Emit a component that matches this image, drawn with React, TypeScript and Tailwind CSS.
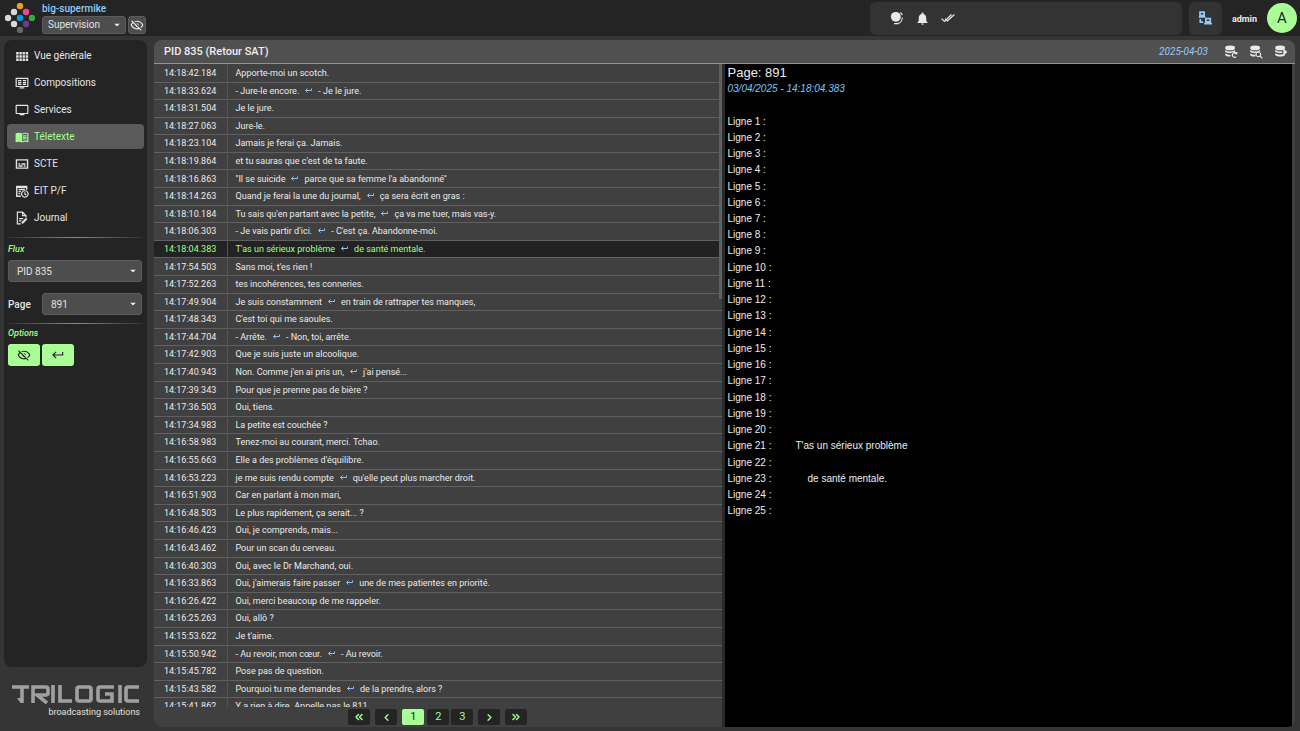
import type { ReactNode } from "react";
import { ChevronLeft, ChevronRight, ChevronsLeft, ChevronsRight } from "lucide-react";
import { MdOutlineTv, MdMenuBook, MdNotifications } from "react-icons/md";

const eyeOff =
	"M2,5.27L3.28,4L20,20.72L18.73,22L15.65,18.92C14.5,19.3 13.28,19.5 12,19.5C7,19.5 2.73,16.39 1,12C1.69,10.24 2.79,8.69 4.19,7.46L2,5.27M12,9A3,3 0 0,1 15,12C15,12.35 14.94,12.69 14.83,13L11,9.17C11.31,9.06 11.65,9 12,9M12,4.5C17,4.5 21.27,7.61 23,12C22.18,14.08 20.79,15.88 19,17.19L17.58,15.76C18.94,14.82 20.06,13.54 20.82,12C19.17,8.64 15.76,6.5 12,6.5C10.91,6.5 9.84,6.68 8.84,7L7.3,5.47C8.74,4.85 10.33,4.5 12,4.5M3.18,12C4.83,15.36 8.24,17.5 12,17.5C12.69,17.5 13.37,17.43 14,17.29L11.72,15C10.29,14.85 9.15,13.71 9,12.28L5.6,8.87C4.61,9.72 3.78,10.78 3.18,12Z";
const keyReturn = "M19,7V11H5.83L9.41,7.41L8,6L2,12L8,18L9.41,16.58L5.83,13H21V7H19Z";

function Icon({ size = 14, children }: { size?: number; children: ReactNode }) {
	return (
		<svg width={size} height={size} viewBox="0 0 24 24" fill="currentColor" className="shrink-0" aria-hidden="true">
			{children}
		</svg>
	);
}

function Stroke({ d, width = 2 }: { d: string; width?: number }) {
	return <path d={d} fill="none" stroke="currentColor" strokeWidth={width} />;
}

const dots = [
	{ x: 15, y: 3, color: "#f9a01b" },
	{ x: 9, y: 9, color: "#d8d8d8" },
	{ x: 21, y: 9, color: "#ec4899" },
	{ x: 3, y: 15, color: "#d8d8d8" },
	{ x: 15, y: 15, color: "#0c9bd8" },
	{ x: 27, y: 15, color: "#3aa648" },
	{ x: 9, y: 21, color: "#d8d8d8" },
	{ x: 21, y: 21, color: "#6b3a8c" },
	{ x: 15, y: 27, color: "#666666" },
];

function DotsLogo() {
	return (
		<svg width="30" height="30" viewBox="0 0 30 30" role="img" aria-label="Logo">
			{dots.map((d) => (
				<circle key={`${d.x}-${d.y}`} cx={d.x} cy={d.y} r="3.2" fill={d.color} />
			))}
		</svg>
	);
}

const nav = [
	{
		label: "Vue générale",
		icon: (
			<Icon>
				<path d="M2 5H6.3V9.6H2ZM7.6 5H11.7V9.6H7.6ZM13 5H17V9.6H13ZM18.3 5H22.5V9.6H18.3ZM2 10.9H6.3V15H2ZM7.6 10.9H11.7V15H7.6ZM13 10.9H17V15H13ZM18.3 10.9H22.5V15H18.3ZM2 16.3H6.3V20.5H2ZM7.6 16.3H11.7V20.5H7.6ZM13 16.3H17V20.5H13ZM18.3 16.3H22.5V20.5H18.3Z" />
			</Icon>
		),
	},
	{
		label: "Compositions",
		icon: (
			<Icon>
				<Stroke d="M2 4H22V18H2Z" />
				<Stroke d="M8 20.5H16M5 8H11M5 11.2H11M5 14.4H11M13.5 8H19M13.5 11.2H19M13.5 14.4H19" width={2.2} />
			</Icon>
		),
	},
	{ label: "Services", icon: <MdOutlineTv size={14} /> },
	{ label: "Téletexte", icon: <MdMenuBook size={14} />, active: true },
	{
		label: "SCTE",
		icon: (
			<Icon>
				<Stroke d="M2.5 5H21.5V19H2.5Z" width={2.4} />
				<Stroke d="M6 12H9M11 12H18M6 15.5H13M15 15.5H18" width={2.4} />
			</Icon>
		),
	},
	{
		label: "EIT P/F",
		icon: (
			<Icon>
				<Stroke d="M10 21H3V4H20V10M3 5.5H20M6 9.5H17M6 13H10M6 16.5H9" width={2.4} />
				<Stroke d="M17 11.5A5.5 5.5 0 1 1 16.9 11.5ZM17 14V17.5L19.5 19" />
			</Icon>
		),
	},
	{
		label: "Journal",
		icon: (
			<Icon>
				<Stroke d="M10 22H4V2H13L19 8V11M13 2V8H19M7 13H14M7 17H11" />
				<Stroke d="M12 21L20 13" width={3.5} />
			</Icon>
		),
	},
];

const BR = "↩";
const rows = [
	["14:18:42.184", "Apporte-moi un scotch."],
	["14:18:33.624", "- Jure-le encore. ↩ - Je le jure."],
	["14:18:31.504", "Je le jure."],
	["14:18:27.063", "Jure-le."],
	["14:18:23.104", "Jamais je ferai ça. Jamais."],
	["14:18:19.864", "et tu sauras que c'est de ta faute."],
	["14:18:16.863", "\"Il se suicide ↩ parce que sa femme l'a abandonné\""],
	["14:18:14.263", "Quand je ferai la une du journal, ↩ ça sera écrit en gras :"],
	["14:18:10.184", "Tu sais qu'en partant avec la petite, ↩ ça va me tuer, mais vas-y."],
	["14:18:06.303", "- Je vais partir d'ici. ↩ - C'est ça. Abandonne-moi."],
	["14:18:04.383", "T'as un sérieux problème ↩ de santé mentale."],
	["14:17:54.503", "Sans moi, t'es rien !"],
	["14:17:52.263", "tes incohérences, tes conneries."],
	["14:17:49.904", "Je suis constamment ↩ en train de rattraper tes manques,"],
	["14:17:48.343", "C'est toi qui me saoules."],
	["14:17:44.704", "- Arrête. ↩ - Non, toi, arrête."],
	["14:17:42.903", "Que je suis juste un alcoolique."],
	["14:17:40.943", "Non. Comme j'en ai pris un, ↩ j'ai pensé..."],
	["14:17:39.343", "Pour que je prenne pas de bière ?"],
	["14:17:36.503", "Oui, tiens."],
	["14:17:34.983", "La petite est couchée ?"],
	["14:16:58.983", "Tenez-moi au courant, merci. Tchao."],
	["14:16:55.663", "Elle a des problèmes d'équilibre."],
	["14:16:53.223", "je me suis rendu compte ↩ qu'elle peut plus marcher droit."],
	["14:16:51.903", "Car en parlant à mon mari,"],
	["14:16:48.503", "Le plus rapidement, ça serait... ?"],
	["14:16:46.423", "Oui, je comprends, mais..."],
	["14:16:43.462", "Pour un scan du cerveau."],
	["14:16:40.303", "Oui, avec le Dr Marchand, oui."],
	["14:16:33.863", "Oui, j'aimerais faire passer ↩ une de mes patientes en priorité."],
	["14:16:26.422", "Oui, merci beaucoup de me rappeler."],
	["14:16:25.263", "Oui, allô ?"],
	["14:15:53.622", "Je t'aime."],
	["14:15:50.942", "- Au revoir, mon cœur. ↩ - Au revoir."],
	["14:15:45.782", "Pose pas de question."],
	["14:15:43.582", "Pourquoi tu me demandes ↩ de la prendre, alors ?"],
	["14:15:41.862", "Y a rien à dire. Appelle pas le 811."],
];
const selected = "14:18:04.383";

const teletext: Record<number, { text: string; indent: string }> = {
	21: { text: "T'as un sérieux problème", indent: "pl-4" },
	23: { text: "de santé mentale.", indent: "pl-7" },
};

function LineBreak() {
	return (
		<svg width="7" height="7" viewBox="0 0 7 7" className="mx-[6px] inline-block align-baseline text-[#90c0f5]" role="img" aria-label="saut de ligne">
			<path d="M6.5 1.5V3.5H0.5M2.5 1.5L0.5 3.5L2.5 5.5" fill="none" stroke="currentColor" />
		</svg>
	);
}

function Subtitle({ text }: { text: string }) {
	const [first, second] = text.split(` ${BR} `);
	return (
		<>
			{first}
			{second && <LineBreak />}
			{second}
		</>
	);
}

function Select({ id, label, value, className, padding = "pl-2" }: { id: string; label?: string; value: string; className: string; padding?: string }) {
	return (
		<div className={`relative text-[10px] ${className}`}>
			<select id={id} aria-label={label} className={`h-full w-full appearance-none rounded-[3px] border border-[#5c5c5c] bg-[#4d4d4d] text-[#e0e0e0] ${padding}`}>
				<option>{value}</option>
			</select>
			<svg width="6" height="3" viewBox="0 0 6 3" className="pointer-events-none absolute top-1/2 right-[6px] -translate-y-1/2" aria-hidden="true">
				<path d="M0 0H6L3 3Z" fill="#eeeeee" />
			</svg>
		</div>
	);
}

function Divider() {
	return <hr className="mx-1 h-px border-0 bg-linear-to-r from-[#5fae50]/10 via-[#5fae50] to-[#5fae50]/10" />;
}

function Header() {
	return (
		<header className="flex h-9 shrink-0 items-center bg-[#242424] pr-[3px] pl-[5px]">
			<DotsLogo />
			<div className="mb-[2px] ml-[7px] flex flex-col">
				<span className="text-[10px] leading-[15px] font-medium text-[#90caf9]">big-supermike</span>
				<div className="flex gap-[2px]">
					<Select id="mode" label="Mode" value="Supervision" className="h-[18px] w-[84px]" padding="pl-[5px]" />
					<button aria-label="Masquer" className="flex h-[18px] w-[18px] items-center justify-center rounded-[3px] border border-[#5c5c5c] bg-[#4d4d4d] text-[#e8e8e8]">
						<Icon>
							<path d={eyeOff} />
						</Icon>
					</button>
				</div>
			</div>
			<div className="ml-auto flex h-[33px] w-[312px] items-center gap-[11px] rounded-md bg-[#333333] pl-5 text-[#eaeaea]">
				<button aria-label="Alarmes">
					<Icon>
						<circle cx="10" cy="10" r="8.5" />
						<Stroke d="M7 21.5H15M11 21.5C17 21.5 21 17 21 11M18 2.5C19.5 3.5 20.5 5 21 7" />
					</Icon>
				</button>
				<button aria-label="Notifications">
					<MdNotifications size={15} />
				</button>
				<button aria-label="Tout acquitter">
					<Icon>
						<Stroke d="M1 13L6 18L18 6M7 13L11 17L23 6" />
					</Icon>
				</button>
			</div>
			<button aria-label="Réseau" className="ml-[7px] flex h-[33px] w-[33px] items-center justify-center rounded-md bg-[#333333] text-[#90caf9]">
				<Icon>
					<Stroke d="M3.5 2H10.5V7.5H3.5ZM1.5 10H12.5M4 13.5V19H9M13.5 13H21V18.5H13.5ZM10.5 21.5H24" width={3} />
				</Icon>
			</button>
			<span className="mt-[3px] ml-[10px] text-[9px] font-bold text-[#eaeaea]">admin</span>
			<span className="ml-[10px] flex h-[30px] w-[30px] items-center justify-center rounded-full bg-[#a9ff96] text-[15px] text-[#242424]">A</span>
		</header>
	);
}

function TrilogicLogo() {
	return (
		<div className="mt-[18px] mr-[7px] mb-[7px] ml-[7px] flex flex-col items-end">
			<svg width="128" height="19" viewBox="0 0 128 19" role="img" aria-label="TRILOGIC" fill="none" stroke="#a0a0a0" strokeWidth="3.6">
				<path d="M0 2H17M10 2V18M21 18V2H34Q36 2 36 4V8Q36 10 34 10H25L35 18M41 0V18M48 0V16H60M67 2H77Q79 2 79 4V14Q79 16 77 16H67Q65 16 65 14V4Q65 2 67 2ZM102 2H88Q86 2 86 4V14Q86 16 88 16H100V9H93M108 0V18M127 2H116Q114 2 114 4V14Q114 16 116 16H127" />
				<path d="M8.5 18L5 13H9Z" fill="#a0a0a0" stroke="none" />
			</svg>
			<span className="text-[9px] leading-4 text-[#e0e0e0]">broadcasting solutions</span>
		</div>
	);
}

function Sidebar() {
	return (
		<aside className="flex w-[143px] shrink-0 flex-col">
			<div className="flex flex-1 flex-col rounded-lg bg-[#242424] text-[#e4e4e4]">
				<nav className="flex flex-col gap-[2px] px-[3px] pt-[3px] pb-[7px]">
					{nav.map((item) => (
						<a
							key={item.label}
							href="#"
							className={`flex h-[25px] items-center gap-[5px] rounded pl-2 text-[10px] ${item.active ? "bg-[#5a5a5a] text-[#a0ff8a]" : ""}`}
						>
							{item.icon}
							{item.label}
						</a>
					))}
				</nav>
				<Divider />
				<label htmlFor="flux" className="mt-1 px-1 text-[9px] leading-[15px] font-medium text-[#a0ff8a] italic">
					Flux
				</label>
				<Select id="flux" value="PID 835" className="mt-[3px] mr-[5px] ml-1 h-[22px]" />
				<div className="mt-[11px] mr-[5px] mb-2 ml-1 flex items-center">
					<label htmlFor="page" className="w-[34px] text-[10px] font-medium">
						Page
					</label>
					<Select id="page" value="891" className="h-[22px] flex-1" />
				</div>
				<Divider />
				<h2 className="mt-[2px] px-1 text-[9px] leading-[15px] font-medium text-[#a0ff8a] italic">Options</h2>
				<div className="mx-1 mt-[3px] flex gap-[2px] text-[#242424]">
					<button aria-label="Masquer les lignes vides" className="flex h-[22px] w-8 items-center justify-center rounded-[3px] bg-[#a9ff96]">
						<Icon>
							<path d={eyeOff} />
						</Icon>
					</button>
					<button aria-label="Retours à la ligne" className="flex h-[22px] w-8 items-center justify-center rounded-[3px] bg-[#a9ff96]">
						<Icon>
							<path d={keyReturn} />
						</Icon>
					</button>
				</div>
			</div>
			<TrilogicLogo />
		</aside>
	);
}

function Database({ children }: { children: ReactNode }) {
	return (
		<Icon>
			<ellipse cx="10.5" cy="5" rx="8.5" ry="4" />
			<path d="M2 8C5 12 16 12 19 8V11C16 12 14 13 12 13.5C8 14 4 13 2 11ZM2 14C5 16.5 9 17 11 16.5V19.5C7 20 4 19 2 17Z" />
			{children}
		</Icon>
	);
}

function PanelBar() {
	return (
		<div className="flex h-6 shrink-0 items-center border-b border-[#6fae62] bg-[#505050] pr-[7px] pl-[10px]">
			<h1 className="pt-px text-[11px] font-medium text-[#eeeeee]">PID 835 (Retour SAT)</h1>
			<time className="mr-4 ml-auto text-[10px] text-[#90caf9] italic">2025-04-03</time>
			<div className="flex gap-[11px] text-[#eaeaea]">
				<button aria-label="Actualiser">
					<Database>
						<Stroke d="M21 14A4 4 0 1 0 21 20M22 12V15H18" />
					</Database>
				</button>
				<button aria-label="Rechercher">
					<Database>
						<Stroke d="M16 12A4 4 0 1 1 15.9 12ZM19 19L23 23" />
					</Database>
				</button>
				<button aria-label="Exporter">
					<Icon>
						<ellipse cx="10.5" cy="5" rx="8.5" ry="4" />
						<path d="M2 8C5 11 10 11.5 14 10.5V13.5C9 14 4 13 2 11ZM2 14C6 17 14 17 19 14.5V17C15 20.5 6 20.5 2 17ZM16 6L23 12L16 18Z" />
					</Icon>
				</button>
			</div>
		</div>
	);
}

const pages = [
	{ label: <ChevronsLeft size={12} strokeWidth={3} />, name: "Première page", className: "mr-[5px]" },
	{ label: <ChevronLeft size={11} strokeWidth={3} />, name: "Page précédente", className: "mr-[5px]" },
	{ label: "1", name: "Page 1", className: "mr-[3px]", active: true },
	{ label: "2", name: "Page 2", className: "mr-[2px]" },
	{ label: "3", name: "Page 3", className: "mr-[5px]" },
	{ label: <ChevronRight size={11} strokeWidth={3} />, name: "Page suivante", className: "mr-[5px]" },
	{ label: <ChevronsRight size={12} strokeWidth={3} />, name: "Dernière page", className: "" },
];

function SubtitleList() {
	return (
		<section className="flex min-h-0 flex-col bg-[#404040]">
			<div className="relative min-h-0 flex-1 overflow-hidden pt-px">
				<table className="h-[651px] w-full border-collapse text-[9px] text-[#eaeaea]">
					<tbody>
						{rows.map(([time, text]) => (
							<tr key={time} className={`border-b border-[#606060] ${time === selected ? "bg-[#222222] text-[#a0ff8a]" : ""}`}>
								<td className="w-[73px] border-r border-[#555555] p-0 pt-px pl-[10px]">{time}</td>
								<td className="p-0 pt-px pl-2 whitespace-nowrap">
									<Subtitle text={text} />
								</td>
							</tr>
						))}
					</tbody>
				</table>
				<div className="absolute top-0 right-0 h-[235px] w-[3px] bg-[#606060]" />
			</div>
			<nav aria-label="Pagination" className="flex h-5 shrink-0 items-start justify-center pt-[2px]">
				{pages.map((p) => (
					<button
						key={p.name}
						aria-label={p.name}
						className={`flex h-4 w-[22px] items-center justify-center rounded-[2px] text-[11px] ${p.className} ${p.active ? "bg-[#a9ff96] text-[#242424]" : "bg-[#242424] text-[#a0ff8a]"}`}
					>
						{p.label}
					</button>
				))}
			</nav>
		</section>
	);
}

function TeletextPage() {
	return (
		<section className="bg-black pl-[3px] font-['Liberation_Sans',sans-serif] text-[10px] text-[#eeeeee]">
			<h2 className="pt-[1px] text-[13px] leading-4">Page: 891</h2>
			<p className="mb-4 leading-4 text-[#7cc4f4] italic">03/04/2025 - 14:18:04.383</p>
			<ul className="flex h-[406px] flex-col">
				{Array.from({ length: 25 }, (_, i) => i + 1).map((n) => (
					<li key={n} className="flex flex-1 items-center">
						<span className="w-[52px]">Ligne {n} :</span>
						{teletext[n] && <span className={teletext[n].indent}>{teletext[n].text}</span>}
					</li>
				))}
			</ul>
		</section>
	);
}

export default function App() {
	return (
		<div className="flex h-screen flex-col bg-[#353535] font-['Roboto',sans-serif]">
			<Header />
			<div className="flex min-h-0 flex-1 gap-[7px] pt-1 pr-[5px] pb-1 pl-1">
				<Sidebar />
				<main className="flex min-w-0 flex-1 flex-col overflow-hidden rounded-lg bg-[#404040]">
					<PanelBar />
					<div className="mr-[3px] grid min-h-0 flex-1 grid-cols-2 gap-[3px] bg-[#2a2a2a]">
						<SubtitleList />
						<TeletextPage />
					</div>
				</main>
			</div>
		</div>
	);
}
